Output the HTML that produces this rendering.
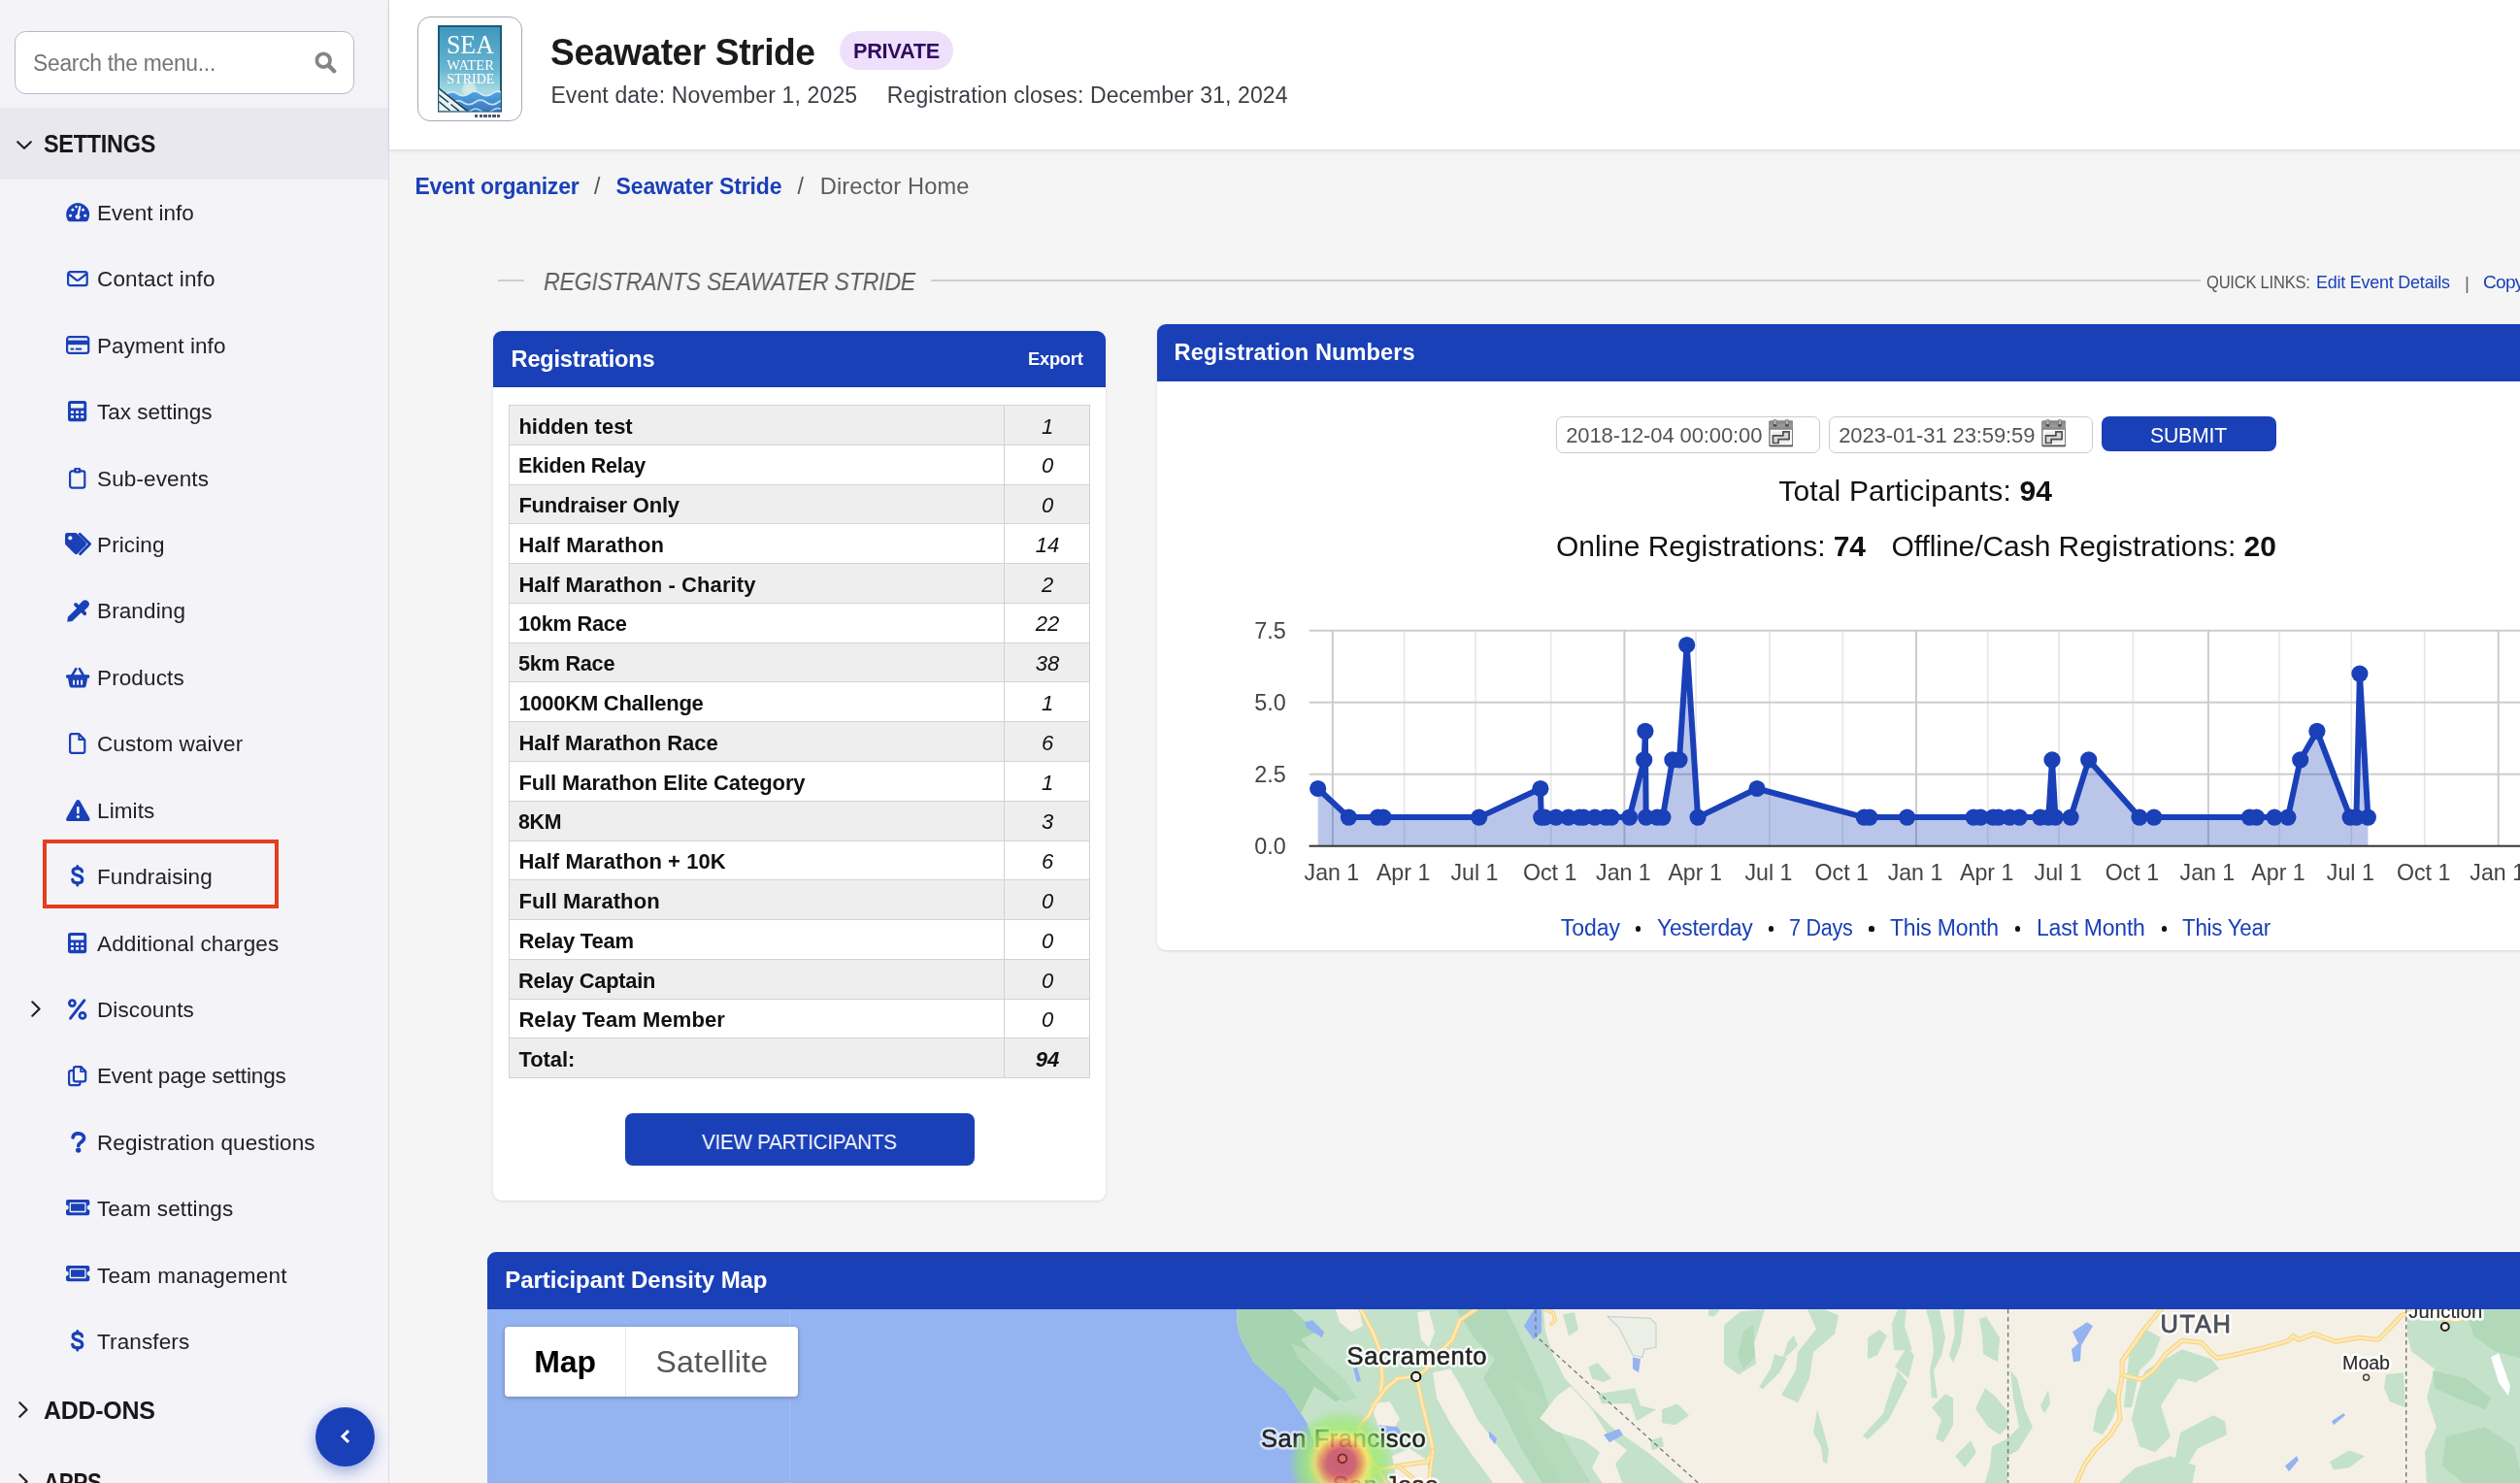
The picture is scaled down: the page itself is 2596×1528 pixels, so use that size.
<!DOCTYPE html>
<html lang="en"><head><meta charset="utf-8"><title>Seawater Stride - Director Home</title>
<style>html,body{margin:0;padding:0}body{width:2596px;height:1528px;overflow:hidden;position:relative;background:#f5f5f5;font-family:'Liberation Sans', sans-serif;will-change:transform}div{box-sizing:content-box}</style></head>
<body>
<div style="position:absolute;left:0;top:0;width:400px;height:1528px;background:#f3f3f8;border-right:1px solid #dcdce5"></div>
<div style="position:absolute;left:15px;top:32px;width:348px;height:63px;border:1px solid #b8b8c6;border-radius:11.5px;background:#fff"></div>
<div style="position:absolute;left:34.00px;top:54.00px;font-size:23px;line-height:1;height:23px;white-space:pre;color:#757575;font-weight:400;font-style:normal;letter-spacing:-0.276px;transform:scaleX(0.9927);transform-origin:0 0;">Search the menu...</div>
<div style="position:absolute;left:324px;top:53.4px;width:23px;height:23px"><svg width="23" height="23" viewBox="0 0 23 23" style="display:block"><circle cx="9.2" cy="9.2" r="6.8" fill="none" stroke="#858585" stroke-width="3.8"/><path d="M14.4 14.4L20.2 20.2" stroke="#858585" stroke-width="4.4" stroke-linecap="round"/></svg></div>
<div style="position:absolute;left:0;top:111px;width:400px;height:74px;background:#e9e8ee"></div>
<div style="position:absolute;left:16.80px;top:145.10px;width:16px;height:9px"><svg width="16" height="9" viewBox="0 0 16 9" style="display:block;overflow:visible"><path d="M1.2 1.2L8 7.8L14.8 1.2" fill="none" stroke="#222" stroke-width="2.2" stroke-linecap="round" stroke-linejoin="round"/></svg></div>
<div style="position:absolute;left:45.30px;top:136.00px;font-size:25px;line-height:1;height:25px;white-space:pre;color:#181818;font-weight:700;font-style:normal;letter-spacing:-0.3px;transform:scaleX(0.9379);transform-origin:0 0;">SETTINGS</div>
<div style="position:absolute;left:67.85px;top:209.20px;width:24.3px;height:19.2px"><svg width="24.3" height="19.2" viewBox="0 0 24.3 19.2" style="display:block;overflow:visible"><path d="M12.15 0A12.15 12.15 0 0 0 1.7 18.1Q2.2 19.2 3.4 19.2H20.9Q22.1 19.2 22.6 18.1A12.15 12.15 0 0 0 12.15 0Z" fill="#1a40b8"/><path d="M12.1 14.6L14.3 4.2" stroke="#f3f3f8" stroke-width="2.3" stroke-linecap="round"/><circle cx="12.1" cy="14.6" r="2.5" fill="#f3f3f8"/><circle cx="4.6" cy="13.3" r="1.45" fill="#f3f3f8"/><circle cx="6.9" cy="7.3" r="1.45" fill="#f3f3f8"/><circle cx="10.6" cy="4.1" r="1.3" fill="#f3f3f8"/><circle cx="17.6" cy="7.3" r="1.45" fill="#f3f3f8"/><circle cx="19.8" cy="13.3" r="1.45" fill="#f3f3f8"/></svg></div>
<div style="position:absolute;left:100.00px;top:209.00px;font-size:22.5px;line-height:1;height:22.5px;white-space:pre;color:#222;font-weight:400;font-style:normal;letter-spacing:-0.038px;">Event info</div>
<div style="position:absolute;left:69.10px;top:279.12px;width:21.8px;height:16.2px"><svg width="21.8" height="16.2" viewBox="0 0 21.8 16.2" style="display:block;overflow:visible"><rect x="1.1" y="1.1" width="19.6" height="14" rx="2.2" fill="none" stroke="#1a40b8" stroke-width="2.2"/><path d="M1.6 3.2L9.6 9.3Q10.9 10.3 12.2 9.3L20.2 3.2" fill="none" stroke="#1a40b8" stroke-width="2.2" stroke-linejoin="round"/></svg></div>
<div style="position:absolute;left:100.00px;top:277.00px;font-size:22.5px;line-height:1;height:22.5px;white-space:pre;color:#222;font-weight:400;font-style:normal;letter-spacing:0.127px;">Contact info</div>
<div style="position:absolute;left:67.85px;top:346.14px;width:24.3px;height:19px"><svg width="24.3" height="19" viewBox="0 0 24.3 19" style="display:block;overflow:visible"><rect x="1.1" y="1.1" width="22.1" height="16.8" rx="2.4" fill="none" stroke="#1a40b8" stroke-width="2.2"/><rect x="1.1" y="4.6" width="22.1" height="4.6" fill="#1a40b8"/><rect x="4.6" y="12.6" width="3.6" height="2" fill="#1a40b8"/><rect x="9.8" y="12.6" width="6.4" height="2" fill="#1a40b8"/></svg></div>
<div style="position:absolute;left:100.00px;top:346.00px;font-size:22.5px;line-height:1;height:22.5px;white-space:pre;color:#222;font-weight:400;font-style:normal;letter-spacing:0.106px;">Payment info</div>
<div style="position:absolute;left:70.40px;top:413.46px;width:19.2px;height:21.2px"><svg width="19.2" height="21.2" viewBox="0 0 19.2 21.2" style="display:block;overflow:visible"><rect x="0" y="0" width="19.2" height="21.2" rx="2.6" fill="#1a40b8"/><rect x="2.9" y="2.9" width="13.4" height="4.6" rx=".6" fill="#f3f3f8"/><rect x="2.9" y="10.2" width="3" height="2.9" rx=".4" fill="#f3f3f8"/><rect x="2.9" y="14.9" width="3" height="2.9" rx=".4" fill="#f3f3f8"/><rect x="8.1" y="10.2" width="3" height="2.9" rx=".4" fill="#f3f3f8"/><rect x="8.1" y="14.9" width="3" height="2.9" rx=".4" fill="#f3f3f8"/><rect x="13.3" y="10.2" width="3" height="2.9" rx=".4" fill="#f3f3f8"/><rect x="13.3" y="14.9" width="3" height="2.9" rx=".4" fill="#f3f3f8"/></svg></div>
<div style="position:absolute;left:100.00px;top:414.00px;font-size:22.5px;line-height:1;height:22.5px;white-space:pre;color:#222;font-weight:400;font-style:normal;letter-spacing:-0.018px;">Tax settings</div>
<div style="position:absolute;left:71.30px;top:481.58px;width:17.4px;height:21.8px"><svg width="17.4" height="21.8" viewBox="0 0 17.4 21.8" style="display:block;overflow:visible"><rect x="1.1" y="3.4" width="15.2" height="17.3" rx="2.2" fill="none" stroke="#1a40b8" stroke-width="2.2"/><rect x="5" y="0" width="7.4" height="5.6" rx="1.8" fill="#1a40b8"/><circle cx="8.7" cy="2.6" r="1" fill="#f3f3f8"/></svg></div>
<div style="position:absolute;left:100.00px;top:483.00px;font-size:22.5px;line-height:1;height:22.5px;white-space:pre;color:#222;font-weight:400;font-style:normal;letter-spacing:0.12px;">Sub-events</div>
<div style="position:absolute;left:66.50px;top:549.40px;width:27px;height:23px"><svg width="27" height="23" viewBox="0 0 27 23" style="display:block;overflow:visible"><path d="M15.2 1.2L25.6 11.6L15.6 21.8" fill="none" stroke="#1a40b8" stroke-width="2.9" stroke-linecap="round" stroke-linejoin="round"/><path d="M0 2.2Q0 0 2.2 0H10.6Q11.6 0 12.4 .8L21.4 9.8Q23 11.4 21.4 13L13 21.5Q11.4 23 9.8 21.5L.8 12.4Q0 11.6 0 10.6Z" fill="#1a40b8"/><circle cx="5.3" cy="5.3" r="2.1" fill="#f3f3f8"/></svg></div>
<div style="position:absolute;left:100.00px;top:551.00px;font-size:22.5px;line-height:1;height:22.5px;white-space:pre;color:#222;font-weight:400;font-style:normal;letter-spacing:0.12px;">Pricing</div>
<div style="position:absolute;left:68.50px;top:617.82px;width:23px;height:23px"><svg width="23" height="23" viewBox="0 0 23 23" style="display:block;overflow:visible"><path d="M.3 22.7L.9 17.7L10.7 7.9L15.3 12.5L5.5 22.1Z" fill="#1a40b8"/><path d="M9 4.9L18.3 14.2" stroke="#1a40b8" stroke-width="3.8" stroke-linecap="round"/><path d="M15.4 7.8L18.7 4.5" stroke="#1a40b8" stroke-width="8.2" stroke-linecap="round"/></svg></div>
<div style="position:absolute;left:100.00px;top:619.00px;font-size:22.5px;line-height:1;height:22.5px;white-space:pre;color:#222;font-weight:400;font-style:normal;letter-spacing:0.12px;">Branding</div>
<div style="position:absolute;left:67.90px;top:687.54px;width:24.2px;height:20.4px"><svg width="24.2" height="20.4" viewBox="0 0 24.2 20.4" style="display:block;overflow:visible"><rect x="0" y="7.2" width="24.2" height="3.6" rx="1.2" fill="#1a40b8"/><path d="M1.9 10.2H22.3L20.6 18.9Q20.3 20.4 18.8 20.4H5.4Q3.9 20.4 3.6 18.9Z" fill="#1a40b8"/><path d="M6.2 8L10.3 1.2M18 8L13.9 1.2" stroke="#1a40b8" stroke-width="2.6" stroke-linecap="round"/><rect x="7.1" y="12.6" width="1.9" height="5.2" rx=".9" fill="#f3f3f8"/><rect x="11.15" y="12.6" width="1.9" height="5.2" rx=".9" fill="#f3f3f8"/><rect x="15.2" y="12.6" width="1.9" height="5.2" rx=".9" fill="#f3f3f8"/></svg></div>
<div style="position:absolute;left:100.00px;top:688.00px;font-size:22.5px;line-height:1;height:22.5px;white-space:pre;color:#222;font-weight:400;font-style:normal;letter-spacing:0.12px;">Products</div>
<div style="position:absolute;left:71.30px;top:755.21px;width:17.4px;height:21.9px"><svg width="17.4" height="21.9" viewBox="0 0 17.4 21.9" style="display:block;overflow:visible"><path d="M3.2 1.1H10.2L16.3 7.2V18.7Q16.3 20.8 14.2 20.8H3.2Q1.1 20.8 1.1 18.7V3.2Q1.1 1.1 3.2 1.1Z" fill="none" stroke="#1a40b8" stroke-width="2.2" stroke-linejoin="round"/><path d="M10.4 1.4V7H16" fill="none" stroke="#1a40b8" stroke-width="2"/></svg></div>
<div style="position:absolute;left:100.00px;top:756.00px;font-size:22.5px;line-height:1;height:22.5px;white-space:pre;color:#222;font-weight:400;font-style:normal;letter-spacing:0.12px;">Custom waiver</div>
<div style="position:absolute;left:67.65px;top:823.58px;width:24.7px;height:22px"><svg width="24.7" height="22" viewBox="0 0 24.7 22" style="display:block;overflow:visible"><path d="M10.5 1.1Q12.35 -1.1 14.2 1.1L24.3 18.9Q25.3 22 22.4 22H2.3Q-.6 22 .4 18.9Z" fill="#1a40b8"/><rect x="11.05" y="6.9" width="2.6" height="7.6" rx="1" fill="#f3f3f8"/><circle cx="12.35" cy="17.6" r="1.65" fill="#f3f3f8"/></svg></div>
<div style="position:absolute;left:100.00px;top:825.00px;font-size:22.5px;line-height:1;height:22.5px;white-space:pre;color:#222;font-weight:400;font-style:normal;letter-spacing:0.12px;">Limits</div>
<div style="position:absolute;left:72.90px;top:891.40px;width:13.6px;height:22.4px"><svg width="13.6" height="22.4" viewBox="0 0 13.6 22.4" style="display:block;overflow:visible"><path d="M11.6 6.9C11.3 4.6 9.4 3.6 6.8 3.6C4 3.6 2.1 5 2.1 7.1C2.1 9.3 3.9 10.1 6.8 10.9C9.9 11.8 11.8 12.7 11.8 15.2C11.8 17.4 9.8 18.8 6.8 18.8C3.9 18.8 2 17.5 1.7 15.3" fill="none" stroke="#1a40b8" stroke-width="3.2" stroke-linecap="round"/><path d="M6.8 1.4V3.8M6.8 18.6V21" stroke="#1a40b8" stroke-width="3" stroke-linecap="round"/></svg></div>
<div style="position:absolute;left:100.00px;top:893.00px;font-size:22.5px;line-height:1;height:22.5px;white-space:pre;color:#222;font-weight:400;font-style:normal;letter-spacing:0.12px;">Fundraising</div>
<div style="position:absolute;left:70.40px;top:960.82px;width:19.2px;height:21.2px"><svg width="19.2" height="21.2" viewBox="0 0 19.2 21.2" style="display:block;overflow:visible"><rect x="0" y="0" width="19.2" height="21.2" rx="2.6" fill="#1a40b8"/><rect x="2.9" y="2.9" width="13.4" height="4.6" rx=".6" fill="#f3f3f8"/><rect x="2.9" y="10.2" width="3" height="2.9" rx=".4" fill="#f3f3f8"/><rect x="2.9" y="14.9" width="3" height="2.9" rx=".4" fill="#f3f3f8"/><rect x="8.1" y="10.2" width="3" height="2.9" rx=".4" fill="#f3f3f8"/><rect x="8.1" y="14.9" width="3" height="2.9" rx=".4" fill="#f3f3f8"/><rect x="13.3" y="10.2" width="3" height="2.9" rx=".4" fill="#f3f3f8"/><rect x="13.3" y="14.9" width="3" height="2.9" rx=".4" fill="#f3f3f8"/></svg></div>
<div style="position:absolute;left:100.00px;top:962.00px;font-size:22.5px;line-height:1;height:22.5px;white-space:pre;color:#222;font-weight:400;font-style:normal;letter-spacing:0.12px;">Additional charges</div>
<div style="position:absolute;left:70.30px;top:1028.84px;width:19.4px;height:22px"><svg width="19.4" height="22" viewBox="0 0 19.4 22" style="display:block;overflow:visible"><circle cx="4.4" cy="4.6" r="3" fill="none" stroke="#1a40b8" stroke-width="2.8"/><circle cx="15" cy="17.4" r="3" fill="none" stroke="#1a40b8" stroke-width="2.8"/><path d="M16.8 1.8L2.6 20.2" stroke="#1a40b8" stroke-width="3" stroke-linecap="round"/></svg></div>
<div style="position:absolute;left:100.00px;top:1030.00px;font-size:22.5px;line-height:1;height:22.5px;white-space:pre;color:#222;font-weight:400;font-style:normal;letter-spacing:0.12px;">Discounts</div>
<div style="position:absolute;left:70.35px;top:1097.66px;width:19.3px;height:21.2px"><svg width="19.3" height="21.2" viewBox="0 0 19.3 21.2" style="display:block;overflow:visible"><path d="M5.2 5.2H3.2Q1.1 5.2 1.1 7.3V18Q1.1 20.1 3.2 20.1H10.4Q12.5 20.1 12.5 18V16.6" fill="none" stroke="#1a40b8" stroke-width="2.2"/><path d="M8 1.1H13.4L18.2 5.9V14.2Q18.2 16.3 16.1 16.3H8Q5.9 16.3 5.9 14.2V3.2Q5.9 1.1 8 1.1Z" fill="#f3f3f8" stroke="#1a40b8" stroke-width="2.2" stroke-linejoin="round"/><path d="M13.2 1.4V6.1H17.9" fill="none" stroke="#1a40b8" stroke-width="1.8"/></svg></div>
<div style="position:absolute;left:100.00px;top:1098.00px;font-size:22.5px;line-height:1;height:22.5px;white-space:pre;color:#222;font-weight:400;font-style:normal;letter-spacing:-0.16px;">Event page settings</div>
<div style="position:absolute;left:72.60px;top:1166.08px;width:15.6px;height:21.8px"><svg width="15.6" height="21.8" viewBox="0 0 15.6 21.8" style="display:block;overflow:visible"><path d="M2.1 5.9C2.6 3.2 4.8 1.9 7.7 1.9C11 1.9 13.5 3.8 13.5 6.6C13.5 9 12 10 10.1 11.2C8.5 12.2 7.8 13 7.8 14.4" fill="none" stroke="#1a40b8" stroke-width="3.7" stroke-linecap="round" stroke-linejoin="round"/><circle cx="7.7" cy="19.1" r="2.7" fill="#1a40b8"/></svg></div>
<div style="position:absolute;left:100.00px;top:1167.00px;font-size:22.5px;line-height:1;height:22.5px;white-space:pre;color:#222;font-weight:400;font-style:normal;letter-spacing:0.089px;">Registration questions</div>
<div style="position:absolute;left:67.85px;top:1235.90px;width:24.3px;height:16.2px"><svg width="24.3" height="16.2" viewBox="0 0 24.3 16.2" style="display:block;overflow:visible"><path d="M2 0H22.3Q24.3 0 24.3 2V5.5A2.6 2.6 0 0 0 24.3 10.7V14.2Q24.3 16.2 22.3 16.2H2Q0 16.2 0 14.2V10.7A2.6 2.6 0 0 0 0 5.5V2Q0 0 2 0Z" fill="#1a40b8"/><rect x="4.3" y="3.7" width="15.7" height="8.8" rx=".6" fill="none" stroke="#f3f3f8" stroke-width="1.3"/></svg></div>
<div style="position:absolute;left:100.00px;top:1235.00px;font-size:22.5px;line-height:1;height:22.5px;white-space:pre;color:#222;font-weight:400;font-style:normal;letter-spacing:0.12px;">Team settings</div>
<div style="position:absolute;left:67.85px;top:1304.32px;width:24.3px;height:16.2px"><svg width="24.3" height="16.2" viewBox="0 0 24.3 16.2" style="display:block;overflow:visible"><path d="M2 0H22.3Q24.3 0 24.3 2V5.5A2.6 2.6 0 0 0 24.3 10.7V14.2Q24.3 16.2 22.3 16.2H2Q0 16.2 0 14.2V10.7A2.6 2.6 0 0 0 0 5.5V2Q0 0 2 0Z" fill="#1a40b8"/><rect x="4.3" y="3.7" width="15.7" height="8.8" rx=".6" fill="none" stroke="#f3f3f8" stroke-width="1.3"/></svg></div>
<div style="position:absolute;left:100.00px;top:1304.00px;font-size:22.5px;line-height:1;height:22.5px;white-space:pre;color:#222;font-weight:400;font-style:normal;letter-spacing:0.199px;">Team management</div>
<div style="position:absolute;left:72.90px;top:1370.34px;width:13.6px;height:22.4px"><svg width="13.6" height="22.4" viewBox="0 0 13.6 22.4" style="display:block;overflow:visible"><path d="M11.6 6.9C11.3 4.6 9.4 3.6 6.8 3.6C4 3.6 2.1 5 2.1 7.1C2.1 9.3 3.9 10.1 6.8 10.9C9.9 11.8 11.8 12.7 11.8 15.2C11.8 17.4 9.8 18.8 6.8 18.8C3.9 18.8 2 17.5 1.7 15.3" fill="none" stroke="#1a40b8" stroke-width="3.2" stroke-linecap="round"/><path d="M6.8 1.4V3.8M6.8 18.6V21" stroke="#1a40b8" stroke-width="3" stroke-linecap="round"/></svg></div>
<div style="position:absolute;left:100.00px;top:1372.00px;font-size:22.5px;line-height:1;height:22.5px;white-space:pre;color:#222;font-weight:400;font-style:normal;letter-spacing:0.12px;">Transfers</div>
<div style="position:absolute;left:44px;top:865px;width:235px;height:63px;border:4px solid #e63c1f"></div>
<div style="position:absolute;left:32.40px;top:1030.50px;width:10px;height:17px"><svg width="10" height="17" viewBox="0 0 10 17" style="display:block;overflow:visible"><path d="M1.3 1.3L8.6 8.5L1.3 15.7" fill="none" stroke="#222" stroke-width="2.2" stroke-linecap="round" stroke-linejoin="round"/></svg></div>
<div style="position:absolute;left:18.60px;top:1444.30px;width:10px;height:17px"><svg width="10" height="17" viewBox="0 0 10 17" style="display:block;overflow:visible"><path d="M1.3 1.3L8.6 8.5L1.3 15.7" fill="none" stroke="#222" stroke-width="2.2" stroke-linecap="round" stroke-linejoin="round"/></svg></div>
<div style="position:absolute;left:45.10px;top:1441.00px;font-size:25px;line-height:1;height:25px;white-space:pre;color:#181818;font-weight:700;font-style:normal;letter-spacing:-0.325px;">ADD-ONS</div>
<div style="position:absolute;left:18.60px;top:1518.00px;width:10px;height:17px"><svg width="10" height="17" viewBox="0 0 10 17" style="display:block;overflow:visible"><path d="M1.3 1.3L8.6 8.5L1.3 15.7" fill="none" stroke="#222" stroke-width="2.2" stroke-linecap="round" stroke-linejoin="round"/></svg></div>
<div style="position:absolute;left:45.10px;top:1515.00px;font-size:25px;line-height:1;height:25px;white-space:pre;color:#181818;font-weight:700;font-style:normal;letter-spacing:-0.3px;transform:scaleX(0.8910);transform-origin:0 0;">APPS</div>
<div style="position:absolute;left:325px;top:1449.8px;width:61px;height:61px;border-radius:50%;background:#1a40b8;box-shadow:0 5px 15px rgba(26,64,184,.42)"></div>
<div style="position:absolute;left:350px;top:1472px;width:12px;height:16px"><svg width="12" height="16" viewBox="0 0 12 16" style="display:block"><path d="M9 2.2L3 8L9 13.8" fill="none" stroke="#fff" stroke-width="3" stroke-linecap="butt" stroke-linejoin="miter"/></svg></div>
<div style="position:absolute;left:401px;top:0;width:2195px;height:154px;background:#fff;border-bottom:1px solid #dfdfe7;box-shadow:0 1px 4px rgba(0,0,0,.09)"></div>
<div style="position:absolute;left:430px;top:17px;width:106px;height:106px;border:1px solid #a9a9b4;border-radius:13px;background:#fff"></div>
<div style="position:absolute;left:451px;top:26.1px;width:66px;height:89.6px"><svg width="66" height="89.6" viewBox="0 0 66 89.6" style="display:block"><defs><linearGradient id="lg" x1="0" y1="0" x2="0" y2="1"><stop offset="0" stop-color="#3f97bd"/><stop offset=".5" stop-color="#68b5d0"/><stop offset=".76" stop-color="#a6d9e2"/><stop offset="1" stop-color="#a6d9e2"/></linearGradient><linearGradient id="wg" x1="0" y1="0" x2="0" y2="1"><stop offset="0" stop-color="#4ea6e4"/><stop offset="1" stop-color="#3a6fb6"/></linearGradient><radialGradient id="sg"><stop offset="0" stop-color="#d6eeea"/><stop offset=".7" stop-color="#cde9e7" stop-opacity=".9"/><stop offset="1" stop-color="#c2e4e6" stop-opacity="0"/></radialGradient><clipPath id="lc"><rect x="1.2" y="1.2" width="63.6" height="87.2"/></clipPath></defs><rect x="1" y="1" width="64" height="87.6" fill="url(#lg)" stroke="#1f5876" stroke-width="2"/><g clip-path="url(#lc)"><circle cx="32.5" cy="66.5" r="9" fill="url(#sg)"/><path d="M8 72Q14 66 20 70.5T32 70.5T44 70.5T56 70.5T68 70.5V92H8Z" fill="url(#wg)"/><path d="M8 72Q14 66 20 70.5T32 70.5T44 70.5T56 70.5T68 70.5" fill="none" stroke="#cdeaf4" stroke-width="1.7"/><path d="M14 81Q20 75 26 79.5T38 79.5T50 79.5T62 79.5T74 79.5" fill="none" stroke="#bfe3f2" stroke-width="1.7"/><path d="M32 90Q38 83.5 44 88T56 88T68 88" fill="none" stroke="#9fd4ef" stroke-width="1.7"/><path d="M1 65L30.5 88.6H1Z" fill="#e8f1ed"/><path d="M1 65L30.5 88.6M1 71.5L11 79.5M13.5 81.5L22 88.4M1 78.6L12.6 88" stroke="#173a55" stroke-width="1.5" fill="none"/></g><text x="33.4" y="29.2" text-anchor="middle" font-family="Liberation Serif, serif" font-size="27.8" fill="#fff" textLength="49" lengthAdjust="spacingAndGlyphs">SEA</text><text x="33.6" y="45.6" text-anchor="middle" font-family="Liberation Serif, serif" font-size="13.8" fill="#fff" textLength="48.6" lengthAdjust="spacingAndGlyphs">WATER</text><text x="33.8" y="59.8" text-anchor="middle" font-family="Liberation Serif, serif" font-size="13.8" fill="#fff" textLength="49" lengthAdjust="spacingAndGlyphs">STRIDE</text></svg></div>
<div style="position:absolute;left:489px;top:118.2px;width:27px;height:2.4px;opacity:.85;background:repeating-linear-gradient(90deg,#2a3f58 0 3.4px,transparent 3.4px 4.6px)"></div>
<div style="position:absolute;left:567.40px;top:35.00px;font-size:38px;line-height:1;height:38px;white-space:pre;color:#1b1b1b;font-weight:700;font-style:normal;letter-spacing:-0.456px;transform:scaleX(0.9795);transform-origin:0 0;">Seawater Stride</div>
<div style="position:absolute;left:865px;top:32px;width:117px;height:40px;border-radius:20px;background:#eee0fb"></div>
<div style="position:absolute;left:879.00px;top:42.00px;font-size:22px;line-height:1;height:22px;white-space:pre;color:#2e0b60;font-weight:700;font-style:normal;letter-spacing:-0.264px;transform:scaleX(0.9851);transform-origin:0 0;">PRIVATE</div>
<div style="position:absolute;left:567.40px;top:87.00px;font-size:23px;line-height:1;height:23px;white-space:pre;color:#3d3d47;font-weight:400;font-style:normal;letter-spacing:0.14px;">Event date: November 1, 2025</div>
<div style="position:absolute;left:913.80px;top:87.00px;font-size:23px;line-height:1;height:23px;white-space:pre;color:#3d3d47;font-weight:400;font-style:normal;letter-spacing:0.097px;">Registration closes: December 31, 2024</div>
<div style="position:absolute;left:427.40px;top:181.00px;font-size:23px;line-height:1;height:23px;white-space:pre;color:#1a40b8;font-weight:700;font-style:normal;letter-spacing:-0.236px;">Event organizer</div>
<div style="position:absolute;left:612.00px;top:181.00px;font-size:23px;line-height:1;height:23px;white-space:pre;color:#555;font-weight:400;font-style:normal;">/</div>
<div style="position:absolute;left:634.50px;top:181.00px;font-size:23px;line-height:1;height:23px;white-space:pre;color:#1a40b8;font-weight:700;font-style:normal;letter-spacing:-0.106px;">Seawater Stride</div>
<div style="position:absolute;left:821.40px;top:181.00px;font-size:23px;line-height:1;height:23px;white-space:pre;color:#555;font-weight:400;font-style:normal;">/</div>
<div style="position:absolute;left:844.80px;top:181.00px;font-size:23.6px;line-height:1;height:23.6px;white-space:pre;color:#5c5c5c;font-weight:400;font-style:normal;letter-spacing:0.116px;">Director Home</div>
<div style="position:absolute;left:513px;top:287.6px;width:27px;height:2px;background:#cfcfcf"></div>
<div style="position:absolute;left:560.00px;top:277.00px;font-size:26.5px;line-height:1;height:26.5px;white-space:pre;color:#5e5e5e;font-weight:400;font-style:italic;letter-spacing:-0.318px;transform:scaleX(0.8751);transform-origin:0 0;">REGISTRANTS SEAWATER STRIDE</div>
<div style="position:absolute;left:959.4px;top:287.6px;width:1308px;height:2px;background:#cfcfcf"></div>
<div style="position:absolute;left:2273.30px;top:281.00px;font-size:19px;line-height:1;height:19px;white-space:pre;color:#555;font-weight:400;font-style:normal;letter-spacing:-0.228px;transform:scaleX(0.8680);transform-origin:0 0;">QUICK LINKS:</div>
<div style="position:absolute;left:2386.20px;top:281.00px;font-size:19px;line-height:1;height:19px;white-space:pre;color:#1a40b8;font-weight:400;font-style:normal;letter-spacing:-0.228px;transform:scaleX(0.9440);transform-origin:0 0;">Edit Event Details</div>
<div style="position:absolute;left:2539.00px;top:282.00px;font-size:19px;line-height:1;height:19px;white-space:pre;color:#666;font-weight:400;font-style:normal;">|</div>
<div style="position:absolute;left:2558.00px;top:281.00px;font-size:19px;line-height:1;height:19px;white-space:pre;color:#1a40b8;font-weight:400;font-style:normal;letter-spacing:-0.7px;">Copy Event</div>
<div style="position:absolute;left:508px;top:341px;width:631px;height:896px;background:#fff;border-radius:9px;box-shadow:0 1px 3px rgba(0,0,0,.12)"></div>
<div style="position:absolute;left:508px;top:341px;width:631px;height:57.6px;background:#1a40b8;border-radius:9px 9px 0 0"></div>
<div style="position:absolute;left:526.60px;top:359.00px;font-size:23.6px;line-height:1;height:23.6px;white-space:pre;color:#fff;font-weight:700;font-style:normal;letter-spacing:-0.237px;">Registrations</div>
<div style="position:absolute;left:1059.10px;top:360.00px;font-size:19px;line-height:1;height:19px;white-space:pre;color:#fff;font-weight:700;font-style:normal;letter-spacing:-0.228px;transform:scaleX(0.9623);transform-origin:0 0;">Export</div>
<div style="position:absolute;left:524px;top:417px;width:599px;height:694px;background:#d3d3d3"></div><div style="position:absolute;left:525.4px;top:418.4px;width:508.6px;height:39.6px;background:#eee"></div><div style="position:absolute;left:1035.4px;top:418.4px;width:86.2px;height:39.6px;background:#eee"></div><div style="position:absolute;left:534.40px;top:429.00px;font-size:22px;line-height:1;height:22px;white-space:pre;color:#111;font-weight:700;font-style:normal;letter-spacing:-0.004px;">hidden test</div><div style="position:absolute;left:79.00px;width:2000px;text-align:center;top:429.00px;font-size:22px;line-height:1;height:22px;white-space:pre;color:#111;font-weight:400;font-style:italic;">1</div><div style="position:absolute;left:525.4px;top:459.4px;width:508.6px;height:39.6px;background:#fff"></div><div style="position:absolute;left:1035.4px;top:459.4px;width:86.2px;height:39.6px;background:#fff"></div><div style="position:absolute;left:534.40px;top:469.00px;font-size:22px;line-height:1;height:22px;white-space:pre;color:#111;font-weight:700;font-style:normal;letter-spacing:-0.264px;transform:scaleX(0.9784);transform-origin:0 0;">Ekiden Relay</div><div style="position:absolute;left:79.00px;width:2000px;text-align:center;top:469.00px;font-size:22px;line-height:1;height:22px;white-space:pre;color:#111;font-weight:400;font-style:italic;">0</div><div style="position:absolute;left:525.4px;top:500.4px;width:508.6px;height:38.6px;background:#eee"></div><div style="position:absolute;left:1035.4px;top:500.4px;width:86.2px;height:38.6px;background:#eee"></div><div style="position:absolute;left:534.40px;top:510.00px;font-size:22px;line-height:1;height:22px;white-space:pre;color:#111;font-weight:700;font-style:normal;letter-spacing:-0.215px;">Fundraiser Only</div><div style="position:absolute;left:79.00px;width:2000px;text-align:center;top:510.00px;font-size:22px;line-height:1;height:22px;white-space:pre;color:#111;font-weight:400;font-style:italic;">0</div><div style="position:absolute;left:525.4px;top:540.4px;width:508.6px;height:39.6px;background:#fff"></div><div style="position:absolute;left:1035.4px;top:540.4px;width:86.2px;height:39.6px;background:#fff"></div><div style="position:absolute;left:534.40px;top:551.00px;font-size:22px;line-height:1;height:22px;white-space:pre;color:#111;font-weight:700;font-style:normal;letter-spacing:0.247px;">Half Marathon</div><div style="position:absolute;left:79.00px;width:2000px;text-align:center;top:551.00px;font-size:22px;line-height:1;height:22px;white-space:pre;color:#111;font-weight:400;font-style:italic;">14</div><div style="position:absolute;left:525.4px;top:581.4px;width:508.6px;height:39.6px;background:#eee"></div><div style="position:absolute;left:1035.4px;top:581.4px;width:86.2px;height:39.6px;background:#eee"></div><div style="position:absolute;left:534.40px;top:592.00px;font-size:22px;line-height:1;height:22px;white-space:pre;color:#111;font-weight:700;font-style:normal;letter-spacing:0.09px;">Half Marathon - Charity</div><div style="position:absolute;left:79.00px;width:2000px;text-align:center;top:592.00px;font-size:22px;line-height:1;height:22px;white-space:pre;color:#111;font-weight:400;font-style:italic;">2</div><div style="position:absolute;left:525.4px;top:622.4px;width:508.6px;height:39.6px;background:#fff"></div><div style="position:absolute;left:1035.4px;top:622.4px;width:86.2px;height:39.6px;background:#fff"></div><div style="position:absolute;left:534.40px;top:632.00px;font-size:22px;line-height:1;height:22px;white-space:pre;color:#111;font-weight:700;font-style:normal;letter-spacing:-0.264px;transform:scaleX(0.9910);transform-origin:0 0;">10km Race</div><div style="position:absolute;left:79.00px;width:2000px;text-align:center;top:632.00px;font-size:22px;line-height:1;height:22px;white-space:pre;color:#111;font-weight:400;font-style:italic;">22</div><div style="position:absolute;left:525.4px;top:663.4px;width:508.6px;height:38.6px;background:#eee"></div><div style="position:absolute;left:1035.4px;top:663.4px;width:86.2px;height:38.6px;background:#eee"></div><div style="position:absolute;left:534.40px;top:673.00px;font-size:22px;line-height:1;height:22px;white-space:pre;color:#111;font-weight:700;font-style:normal;letter-spacing:-0.264px;transform:scaleX(0.9857);transform-origin:0 0;">5km Race</div><div style="position:absolute;left:79.00px;width:2000px;text-align:center;top:673.00px;font-size:22px;line-height:1;height:22px;white-space:pre;color:#111;font-weight:400;font-style:italic;">38</div><div style="position:absolute;left:525.4px;top:703.4px;width:508.6px;height:39.6px;background:#fff"></div><div style="position:absolute;left:1035.4px;top:703.4px;width:86.2px;height:39.6px;background:#fff"></div><div style="position:absolute;left:534.40px;top:714.00px;font-size:22px;line-height:1;height:22px;white-space:pre;color:#111;font-weight:700;font-style:normal;letter-spacing:-0.263px;">1000KM Challenge</div><div style="position:absolute;left:79.00px;width:2000px;text-align:center;top:714.00px;font-size:22px;line-height:1;height:22px;white-space:pre;color:#111;font-weight:400;font-style:italic;">1</div><div style="position:absolute;left:525.4px;top:744.4px;width:508.6px;height:39.6px;background:#eee"></div><div style="position:absolute;left:1035.4px;top:744.4px;width:86.2px;height:39.6px;background:#eee"></div><div style="position:absolute;left:534.40px;top:755.00px;font-size:22px;line-height:1;height:22px;white-space:pre;color:#111;font-weight:700;font-style:normal;letter-spacing:0.001px;">Half Marathon Race</div><div style="position:absolute;left:79.00px;width:2000px;text-align:center;top:755.00px;font-size:22px;line-height:1;height:22px;white-space:pre;color:#111;font-weight:400;font-style:italic;">6</div><div style="position:absolute;left:525.4px;top:785.4px;width:508.6px;height:39.6px;background:#fff"></div><div style="position:absolute;left:1035.4px;top:785.4px;width:86.2px;height:39.6px;background:#fff"></div><div style="position:absolute;left:534.40px;top:796.00px;font-size:22px;line-height:1;height:22px;white-space:pre;color:#111;font-weight:700;font-style:normal;letter-spacing:-0.113px;">Full Marathon Elite Category</div><div style="position:absolute;left:79.00px;width:2000px;text-align:center;top:796.00px;font-size:22px;line-height:1;height:22px;white-space:pre;color:#111;font-weight:400;font-style:italic;">1</div><div style="position:absolute;left:525.4px;top:826.4px;width:508.6px;height:39.6px;background:#eee"></div><div style="position:absolute;left:1035.4px;top:826.4px;width:86.2px;height:39.6px;background:#eee"></div><div style="position:absolute;left:534.40px;top:836.00px;font-size:22px;line-height:1;height:22px;white-space:pre;color:#111;font-weight:700;font-style:normal;letter-spacing:-0.264px;transform:scaleX(0.9702);transform-origin:0 0;">8KM</div><div style="position:absolute;left:79.00px;width:2000px;text-align:center;top:836.00px;font-size:22px;line-height:1;height:22px;white-space:pre;color:#111;font-weight:400;font-style:italic;">3</div><div style="position:absolute;left:525.4px;top:867.4px;width:508.6px;height:38.6px;background:#fff"></div><div style="position:absolute;left:1035.4px;top:867.4px;width:86.2px;height:38.6px;background:#fff"></div><div style="position:absolute;left:534.40px;top:877.00px;font-size:22px;line-height:1;height:22px;white-space:pre;color:#111;font-weight:700;font-style:normal;letter-spacing:0.063px;">Half Marathon + 10K</div><div style="position:absolute;left:79.00px;width:2000px;text-align:center;top:877.00px;font-size:22px;line-height:1;height:22px;white-space:pre;color:#111;font-weight:400;font-style:italic;">6</div><div style="position:absolute;left:525.4px;top:907.4px;width:508.6px;height:39.6px;background:#eee"></div><div style="position:absolute;left:1035.4px;top:907.4px;width:86.2px;height:39.6px;background:#eee"></div><div style="position:absolute;left:534.40px;top:918.00px;font-size:22px;line-height:1;height:22px;white-space:pre;color:#111;font-weight:700;font-style:normal;letter-spacing:0.083px;">Full Marathon</div><div style="position:absolute;left:79.00px;width:2000px;text-align:center;top:918.00px;font-size:22px;line-height:1;height:22px;white-space:pre;color:#111;font-weight:400;font-style:italic;">0</div><div style="position:absolute;left:525.4px;top:948.4px;width:508.6px;height:39.6px;background:#fff"></div><div style="position:absolute;left:1035.4px;top:948.4px;width:86.2px;height:39.6px;background:#fff"></div><div style="position:absolute;left:534.40px;top:959.00px;font-size:22px;line-height:1;height:22px;white-space:pre;color:#111;font-weight:700;font-style:normal;letter-spacing:-0.226px;">Relay Team</div><div style="position:absolute;left:79.00px;width:2000px;text-align:center;top:959.00px;font-size:22px;line-height:1;height:22px;white-space:pre;color:#111;font-weight:400;font-style:italic;">0</div><div style="position:absolute;left:525.4px;top:989.4px;width:508.6px;height:39.6px;background:#eee"></div><div style="position:absolute;left:1035.4px;top:989.4px;width:86.2px;height:39.6px;background:#eee"></div><div style="position:absolute;left:534.40px;top:1000.00px;font-size:22px;line-height:1;height:22px;white-space:pre;color:#111;font-weight:700;font-style:normal;letter-spacing:-0.264px;transform:scaleX(0.9932);transform-origin:0 0;">Relay Captain</div><div style="position:absolute;left:79.00px;width:2000px;text-align:center;top:1000.00px;font-size:22px;line-height:1;height:22px;white-space:pre;color:#111;font-weight:400;font-style:italic;">0</div><div style="position:absolute;left:525.4px;top:1030.4px;width:508.6px;height:38.6px;background:#fff"></div><div style="position:absolute;left:1035.4px;top:1030.4px;width:86.2px;height:38.6px;background:#fff"></div><div style="position:absolute;left:534.40px;top:1040.00px;font-size:22px;line-height:1;height:22px;white-space:pre;color:#111;font-weight:700;font-style:normal;letter-spacing:0.086px;">Relay Team Member</div><div style="position:absolute;left:79.00px;width:2000px;text-align:center;top:1040.00px;font-size:22px;line-height:1;height:22px;white-space:pre;color:#111;font-weight:400;font-style:italic;">0</div><div style="position:absolute;left:525.4px;top:1070.4px;width:508.6px;height:39.6px;background:#eee"></div><div style="position:absolute;left:1035.4px;top:1070.4px;width:86.2px;height:39.6px;background:#eee"></div><div style="position:absolute;left:534.40px;top:1081.00px;font-size:22px;line-height:1;height:22px;white-space:pre;color:#111;font-weight:700;font-style:normal;letter-spacing:-0.058px;">Total:</div><div style="position:absolute;left:79.00px;width:2000px;text-align:center;top:1081.00px;font-size:22px;line-height:1;height:22px;white-space:pre;color:#111;font-weight:700;font-style:italic;">94</div>
<div style="position:absolute;left:644px;top:1146.7px;width:360px;height:54px;border-radius:8px;background:#1a40b8"></div>
<div style="position:absolute;left:723.00px;top:1166.00px;font-size:22.5px;line-height:1;height:22.5px;white-space:pre;color:#fff;font-weight:400;font-style:normal;letter-spacing:-0.27px;transform:scaleX(0.9156);transform-origin:0 0;">VIEW PARTICIPANTS</div>
<div style="position:absolute;left:1192px;top:334.3px;width:1420px;height:645.2px;background:#fff;border-radius:9px;box-shadow:0 1px 3px rgba(0,0,0,.12)"></div>
<div style="position:absolute;left:1192px;top:334.3px;width:1420px;height:58.4px;background:#1a40b8;border-radius:9px 0 0 0"></div>
<div style="position:absolute;left:1209.50px;top:352.00px;font-size:23.6px;line-height:1;height:23.6px;white-space:pre;color:#fff;font-weight:700;font-style:normal;letter-spacing:0.092px;">Registration Numbers</div>
<div style="position:absolute;left:1603px;top:429.2px;width:270px;height:35.6px;border:1px solid #ccc;border-radius:7px;background:#fff"></div>
<div style="position:absolute;left:1613.20px;top:438.00px;font-size:22px;line-height:1;height:22px;white-space:pre;color:#555;font-weight:400;font-style:normal;letter-spacing:-0.116px;">2018-12-04 00:00:00</div>
<div style="position:absolute;left:1821.8px;top:432.2px;width:25.6px;height:28.6px"><svg width="25.6" height="28.6" viewBox="0 0 25.6 28.6" style="display:block"><defs><linearGradient id="cg" x1="0" y1="0" x2="0" y2="1"><stop offset="0" stop-color="#858585"/><stop offset=".6" stop-color="#9b9b9b"/><stop offset="1" stop-color="#7f7f7f"/></linearGradient></defs><rect x=".9" y="2.2" width="23.8" height="25.4" rx="1.3" fill="#fdfdfd" stroke="#7f7f7f" stroke-width="1.5"/><rect x=".2" y="1.6" width="25.2" height="9.2" rx="1.3" fill="url(#cg)"/><rect x=".6" y="26.4" width="24.4" height="1.9" rx=".8" fill="#5c5c5c"/><rect x="4.9" y=".2" width="3.2" height="6.4" rx="1.5" fill="#b5b5b5" stroke="#6e6e6e" stroke-width=".8"/><rect x="17.3" y=".2" width="3.2" height="6.4" rx="1.5" fill="#b5b5b5" stroke="#6e6e6e" stroke-width=".8"/><ellipse cx="6.5" cy="6.4" rx="2" ry="1.3" fill="#505050"/><ellipse cx="18.9" cy="6.4" rx="2" ry="1.3" fill="#505050"/><rect x="4.3" y="12.8" width="16.9" height="11.8" fill="#ececec"/><path d="M14.9 12.9H21.1V20.6H10.1V24.5H4.4V16.8H14.9Z" fill="#d6d6d6" stroke="#4d4d4d" stroke-width="1.7" stroke-linejoin="miter"/></svg></div>
<div style="position:absolute;left:1884px;top:429.2px;width:270px;height:35.6px;border:1px solid #ccc;border-radius:7px;background:#fff"></div>
<div style="position:absolute;left:1894.20px;top:438.00px;font-size:22px;line-height:1;height:22px;white-space:pre;color:#555;font-weight:400;font-style:normal;letter-spacing:-0.116px;">2023-01-31 23:59:59</div>
<div style="position:absolute;left:2102.8px;top:432.2px;width:25.6px;height:28.6px"><svg width="25.6" height="28.6" viewBox="0 0 25.6 28.6" style="display:block"><defs><linearGradient id="cg" x1="0" y1="0" x2="0" y2="1"><stop offset="0" stop-color="#858585"/><stop offset=".6" stop-color="#9b9b9b"/><stop offset="1" stop-color="#7f7f7f"/></linearGradient></defs><rect x=".9" y="2.2" width="23.8" height="25.4" rx="1.3" fill="#fdfdfd" stroke="#7f7f7f" stroke-width="1.5"/><rect x=".2" y="1.6" width="25.2" height="9.2" rx="1.3" fill="url(#cg)"/><rect x=".6" y="26.4" width="24.4" height="1.9" rx=".8" fill="#5c5c5c"/><rect x="4.9" y=".2" width="3.2" height="6.4" rx="1.5" fill="#b5b5b5" stroke="#6e6e6e" stroke-width=".8"/><rect x="17.3" y=".2" width="3.2" height="6.4" rx="1.5" fill="#b5b5b5" stroke="#6e6e6e" stroke-width=".8"/><ellipse cx="6.5" cy="6.4" rx="2" ry="1.3" fill="#505050"/><ellipse cx="18.9" cy="6.4" rx="2" ry="1.3" fill="#505050"/><rect x="4.3" y="12.8" width="16.9" height="11.8" fill="#ececec"/><path d="M14.9 12.9H21.1V20.6H10.1V24.5H4.4V16.8H14.9Z" fill="#d6d6d6" stroke="#4d4d4d" stroke-width="1.7" stroke-linejoin="miter"/></svg></div>
<div style="position:absolute;left:2165px;top:429.2px;width:180.2px;height:35.6px;border-radius:8px;background:#1a40b8"></div>
<div style="position:absolute;left:2215.20px;top:438.00px;font-size:22px;line-height:1;height:22px;white-space:pre;color:#fff;font-weight:400;font-style:normal;letter-spacing:-0.264px;transform:scaleX(0.9676);transform-origin:0 0;">SUBMIT</div>
<div style="position:absolute;left:1832.3px;top:491px;font-size:30px;line-height:1;white-space:pre;color:#111;letter-spacing:0.15px">Total Participants: <b>94</b></div>
<div style="position:absolute;left:1603px;top:548px;font-size:30px;line-height:1;white-space:pre;color:#111;letter-spacing:-0.05px">Online Registrations: <b>74</b></div>
<div style="position:absolute;left:1948.4px;top:548px;font-size:30px;line-height:1;white-space:pre;color:#111;letter-spacing:-0.05px">Offline/Cash Registrations: <b>20</b></div>
<div style="position:absolute;left:1280px;top:620px;width:1316px;height:300px;overflow:hidden"><svg width="1316" height="300" viewBox="0 0 1316 300" style="display:block;font-family:'Liberation Sans', sans-serif"><rect x="165.8" y="30" width="1.6" height="221" fill="#e6e6e6"/><rect x="239.2" y="30" width="1.6" height="221" fill="#e6e6e6"/><rect x="316.9" y="30" width="1.6" height="221" fill="#e6e6e6"/><rect x="466.3" y="30" width="1.6" height="221" fill="#e6e6e6"/><rect x="542.1" y="30" width="1.6" height="221" fill="#e6e6e6"/><rect x="617.5" y="30" width="1.6" height="221" fill="#e6e6e6"/><rect x="766.9" y="30" width="1.6" height="221" fill="#e6e6e6"/><rect x="840.3" y="30" width="1.6" height="221" fill="#e6e6e6"/><rect x="916.6" y="30" width="1.6" height="221" fill="#e6e6e6"/><rect x="1067.2" y="30" width="1.6" height="221" fill="#e6e6e6"/><rect x="1141.5" y="30" width="1.6" height="221" fill="#e6e6e6"/><rect x="1216.9" y="30" width="1.6" height="221" fill="#e6e6e6"/><rect x="91.9" y="30" width="2" height="221" fill="#ccc"/><rect x="392.4" y="30" width="2" height="221" fill="#ccc"/><rect x="693.0" y="30" width="2" height="221" fill="#ccc"/><rect x="993.9" y="30" width="2" height="221" fill="#ccc"/><rect x="1292.7" y="30" width="2" height="221" fill="#ccc"/><rect x="68.6" y="176.7" width="1260" height="2" fill="#ccc"/><rect x="68.6" y="102.7" width="1260" height="2" fill="#ccc"/><rect x="68.6" y="28.7" width="1260" height="2" fill="#ccc"/><polygon points="77.7,251.7 77.7,192.5 109.4,222.1 139.4,222.1 145.1,222.1 243.7,222.1 306.9,192.5 307.7,222.1 311.4,222.1 322.9,222.1 335.7,222.1 347.1,222.1 351.4,222.1 362.9,222.1 374.3,222.1 380.0,222.1 398.6,222.1 413.7,162.9 414.9,133.3 415.7,222.1 427.1,222.1 432.9,222.1 442.9,162.9 450.0,162.9 457.7,44.5 469.1,222.1 530.0,192.5 640.3,222.1 646.0,222.1 684.6,222.1 753.1,222.1 760.3,222.1 773.1,222.1 778.9,222.1 790.3,222.1 800.3,222.1 821.7,222.1 830.3,222.1 834.0,162.9 837.4,222.1 853.1,222.1 871.7,162.9 924.0,222.1 938.9,222.1 1037.4,222.1 1044.6,222.1 1063.1,222.1 1076.9,222.1 1089.7,162.9 1106.9,133.3 1141.1,222.1 1147.4,222.1 1150.9,74.1 1159.4,222.1 1159.4,251.7" fill="#1a40b8" fill-opacity=".3"/><rect x="68.6" y="250.7" width="1260" height="2" fill="#333"/><polyline points="77.7,192.5 109.4,222.1 139.4,222.1 145.1,222.1 243.7,222.1 306.9,192.5 307.7,222.1 311.4,222.1 322.9,222.1 335.7,222.1 347.1,222.1 351.4,222.1 362.9,222.1 374.3,222.1 380.0,222.1 398.6,222.1 413.7,162.9 414.9,133.3 415.7,222.1 427.1,222.1 432.9,222.1 442.9,162.9 450.0,162.9 457.7,44.5 469.1,222.1 530.0,192.5 640.3,222.1 646.0,222.1 684.6,222.1 753.1,222.1 760.3,222.1 773.1,222.1 778.9,222.1 790.3,222.1 800.3,222.1 821.7,222.1 830.3,222.1 834.0,162.9 837.4,222.1 853.1,222.1 871.7,162.9 924.0,222.1 938.9,222.1 1037.4,222.1 1044.6,222.1 1063.1,222.1 1076.9,222.1 1089.7,162.9 1106.9,133.3 1141.1,222.1 1147.4,222.1 1150.9,74.1 1159.4,222.1" fill="none" stroke="#1a40b8" stroke-width="6" stroke-linejoin="round"/><circle cx="77.7" cy="192.5" r="8.6" fill="#1a40b8"/><circle cx="109.4" cy="222.1" r="8.6" fill="#1a40b8"/><circle cx="139.4" cy="222.1" r="8.6" fill="#1a40b8"/><circle cx="145.1" cy="222.1" r="8.6" fill="#1a40b8"/><circle cx="243.7" cy="222.1" r="8.6" fill="#1a40b8"/><circle cx="306.9" cy="192.5" r="8.6" fill="#1a40b8"/><circle cx="307.7" cy="222.1" r="8.6" fill="#1a40b8"/><circle cx="311.4" cy="222.1" r="8.6" fill="#1a40b8"/><circle cx="322.9" cy="222.1" r="8.6" fill="#1a40b8"/><circle cx="335.7" cy="222.1" r="8.6" fill="#1a40b8"/><circle cx="347.1" cy="222.1" r="8.6" fill="#1a40b8"/><circle cx="351.4" cy="222.1" r="8.6" fill="#1a40b8"/><circle cx="362.9" cy="222.1" r="8.6" fill="#1a40b8"/><circle cx="374.3" cy="222.1" r="8.6" fill="#1a40b8"/><circle cx="380.0" cy="222.1" r="8.6" fill="#1a40b8"/><circle cx="398.6" cy="222.1" r="8.6" fill="#1a40b8"/><circle cx="413.7" cy="162.9" r="8.6" fill="#1a40b8"/><circle cx="414.9" cy="133.3" r="8.6" fill="#1a40b8"/><circle cx="415.7" cy="222.1" r="8.6" fill="#1a40b8"/><circle cx="427.1" cy="222.1" r="8.6" fill="#1a40b8"/><circle cx="432.9" cy="222.1" r="8.6" fill="#1a40b8"/><circle cx="442.9" cy="162.9" r="8.6" fill="#1a40b8"/><circle cx="450.0" cy="162.9" r="8.6" fill="#1a40b8"/><circle cx="457.7" cy="44.5" r="8.6" fill="#1a40b8"/><circle cx="469.1" cy="222.1" r="8.6" fill="#1a40b8"/><circle cx="530.0" cy="192.5" r="8.6" fill="#1a40b8"/><circle cx="640.3" cy="222.1" r="8.6" fill="#1a40b8"/><circle cx="646.0" cy="222.1" r="8.6" fill="#1a40b8"/><circle cx="684.6" cy="222.1" r="8.6" fill="#1a40b8"/><circle cx="753.1" cy="222.1" r="8.6" fill="#1a40b8"/><circle cx="760.3" cy="222.1" r="8.6" fill="#1a40b8"/><circle cx="773.1" cy="222.1" r="8.6" fill="#1a40b8"/><circle cx="778.9" cy="222.1" r="8.6" fill="#1a40b8"/><circle cx="790.3" cy="222.1" r="8.6" fill="#1a40b8"/><circle cx="800.3" cy="222.1" r="8.6" fill="#1a40b8"/><circle cx="821.7" cy="222.1" r="8.6" fill="#1a40b8"/><circle cx="830.3" cy="222.1" r="8.6" fill="#1a40b8"/><circle cx="834.0" cy="162.9" r="8.6" fill="#1a40b8"/><circle cx="837.4" cy="222.1" r="8.6" fill="#1a40b8"/><circle cx="853.1" cy="222.1" r="8.6" fill="#1a40b8"/><circle cx="871.7" cy="162.9" r="8.6" fill="#1a40b8"/><circle cx="924.0" cy="222.1" r="8.6" fill="#1a40b8"/><circle cx="938.9" cy="222.1" r="8.6" fill="#1a40b8"/><circle cx="1037.4" cy="222.1" r="8.6" fill="#1a40b8"/><circle cx="1044.6" cy="222.1" r="8.6" fill="#1a40b8"/><circle cx="1063.1" cy="222.1" r="8.6" fill="#1a40b8"/><circle cx="1076.9" cy="222.1" r="8.6" fill="#1a40b8"/><circle cx="1089.7" cy="162.9" r="8.6" fill="#1a40b8"/><circle cx="1106.9" cy="133.3" r="8.6" fill="#1a40b8"/><circle cx="1141.1" cy="222.1" r="8.6" fill="#1a40b8"/><circle cx="1147.4" cy="222.1" r="8.6" fill="#1a40b8"/><circle cx="1150.9" cy="74.1" r="8.6" fill="#1a40b8"/><circle cx="1159.4" cy="222.1" r="8.6" fill="#1a40b8"/><text x="44.9" y="260.0" text-anchor="end" font-size="23.4" fill="#444">0.0</text><text x="44.9" y="186.0" text-anchor="end" font-size="23.4" fill="#444">2.5</text><text x="44.9" y="112.0" text-anchor="end" font-size="23.4" fill="#444">5.0</text><text x="44.9" y="38.0" text-anchor="end" font-size="23.4" fill="#444">7.5</text><text x="91.9" y="287.1" text-anchor="middle" font-size="23.2" fill="#444">Jan 1</text><text x="165.6" y="287.1" text-anchor="middle" font-size="23.2" fill="#444">Apr 1</text><text x="239.0" y="287.1" text-anchor="middle" font-size="23.2" fill="#444">Jul 1</text><text x="316.7" y="287.1" text-anchor="middle" font-size="23.2" fill="#444">Oct 1</text><text x="392.4" y="287.1" text-anchor="middle" font-size="23.2" fill="#444">Jan 1</text><text x="466.1" y="287.1" text-anchor="middle" font-size="23.2" fill="#444">Apr 1</text><text x="541.9" y="287.1" text-anchor="middle" font-size="23.2" fill="#444">Jul 1</text><text x="617.3" y="287.1" text-anchor="middle" font-size="23.2" fill="#444">Oct 1</text><text x="693.0" y="287.1" text-anchor="middle" font-size="23.2" fill="#444">Jan 1</text><text x="766.7" y="287.1" text-anchor="middle" font-size="23.2" fill="#444">Apr 1</text><text x="840.1" y="287.1" text-anchor="middle" font-size="23.2" fill="#444">Jul 1</text><text x="916.4" y="287.1" text-anchor="middle" font-size="23.2" fill="#444">Oct 1</text><text x="993.9" y="287.1" text-anchor="middle" font-size="23.2" fill="#444">Jan 1</text><text x="1067.0" y="287.1" text-anchor="middle" font-size="23.2" fill="#444">Apr 1</text><text x="1141.3" y="287.1" text-anchor="middle" font-size="23.2" fill="#444">Jul 1</text><text x="1216.7" y="287.1" text-anchor="middle" font-size="23.2" fill="#444">Oct 1</text><text x="1292.7" y="287.1" text-anchor="middle" font-size="23.2" fill="#444">Jan 1</text></svg></div>
<div style="position:absolute;left:1607.70px;top:945.00px;font-size:23px;line-height:1;height:23px;white-space:pre;color:#1a40b8;font-weight:400;font-style:normal;letter-spacing:0.005px;">Today</div>
<div style="position:absolute;left:1706.60px;top:945.00px;font-size:23px;line-height:1;height:23px;white-space:pre;color:#1a40b8;font-weight:400;font-style:normal;letter-spacing:-0.276px;transform:scaleX(0.9953);transform-origin:0 0;">Yesterday</div>
<div style="position:absolute;left:1842.90px;top:945.00px;font-size:23px;line-height:1;height:23px;white-space:pre;color:#1a40b8;font-weight:400;font-style:normal;letter-spacing:-0.276px;transform:scaleX(0.9351);transform-origin:0 0;">7 Days</div>
<div style="position:absolute;left:1946.90px;top:945.00px;font-size:23px;line-height:1;height:23px;white-space:pre;color:#1a40b8;font-weight:400;font-style:normal;letter-spacing:-0.177px;">This Month</div>
<div style="position:absolute;left:2098.00px;top:945.00px;font-size:23px;line-height:1;height:23px;white-space:pre;color:#1a40b8;font-weight:400;font-style:normal;letter-spacing:-0.21px;">Last Month</div>
<div style="position:absolute;left:2248.00px;top:945.00px;font-size:23px;line-height:1;height:23px;white-space:pre;color:#1a40b8;font-weight:400;font-style:normal;letter-spacing:-0.276px;transform:scaleX(0.9730);transform-origin:0 0;">This Year</div>
<div style="position:absolute;left:1684.8px;top:954.4px;width:5.2px;height:5.2px;border-radius:50%;background:#111"></div>
<div style="position:absolute;left:1821.7px;top:954.4px;width:5.2px;height:5.2px;border-radius:50%;background:#111"></div>
<div style="position:absolute;left:1925.4px;top:954.4px;width:5.2px;height:5.2px;border-radius:50%;background:#111"></div>
<div style="position:absolute;left:2075.7px;top:954.4px;width:5.2px;height:5.2px;border-radius:50%;background:#111"></div>
<div style="position:absolute;left:2226.5px;top:954.4px;width:5.2px;height:5.2px;border-radius:50%;background:#111"></div>
<div style="position:absolute;left:502px;top:1290px;width:2110px;height:59px;background:#1a40b8;border-radius:9px 0 0 0"></div>
<div style="position:absolute;left:520.30px;top:1307.00px;font-size:24px;line-height:1;height:24px;white-space:pre;color:#fff;font-weight:700;font-style:normal;letter-spacing:-0.085px;">Participant Density Map</div>
<div style="position:absolute;left:502px;top:1348.7px;width:2094px;height:180px;overflow:hidden"><svg width="2094" height="180" viewBox="0 0 2094 180" style="display:block;font-family:'Liberation Sans', sans-serif"><defs><radialGradient id="heat"><stop offset="0" stop-color="#cb4d67" stop-opacity=".88"/><stop offset=".26" stop-color="#cf5167" stop-opacity=".86"/><stop offset=".38" stop-color="#ee8f52" stop-opacity=".84"/><stop offset=".5" stop-color="#f1e75c" stop-opacity=".8"/><stop offset=".64" stop-color="#a2ec6c" stop-opacity=".78"/><stop offset=".82" stop-color="#9ae86c" stop-opacity=".55"/><stop offset="1" stop-color="#90e26e" stop-opacity="0"/></radialGradient></defs><rect width="2094" height="180" fill="#94b3f1"/><rect x="311" y="0" width="1" height="180" fill="#a3bef3"/><polygon points="772.3,-0.7 772.3,14.3 776.0,29.3 789.4,54.2 808.0,71.3 821.8,82.7 837.0,105.6 844.7,117.0 850.0,133.3 862.0,155.3 872.0,181.3 2098.0,181.3 2098.0,-0.7" fill="#f4f0e6" /><polygon points="772.3,-0.7 772.3,14.3 776.0,29.3 789.4,54.2 808.0,71.3 821.8,82.7 837.0,105.6 844.7,117.0 850.0,133.3 862.0,155.3 872.0,181.3 1236.0,181.3 1198.0,149.3 1158.0,121.3 1138.0,101.3 1110.0,71.3 1098.0,47.3 1090.0,23.3 1088.0,-0.7" fill="#c3e2c9" /><polygon points="772.3,-0.7 828.0,-0.7 854.0,23.3 838.0,31.3 864.0,59.3 890.0,87.3 874.0,95.3 852.0,79.3 838.0,107.3 821.8,82.7 808.0,71.3 789.4,54.2 776.0,29.3 772.3,14.3" fill="#a6d3b0" /><polygon points="828.0,35.3 850.0,43.3 882.0,71.3 896.0,91.3 882.0,95.3 856.0,71.3 834.0,49.3" fill="#b6dbbd" /><polygon points="834.0,0.3 868.0,0.3 882.0,17.3 862.0,27.3 846.0,13.3" fill="#c3e2c9" /><polygon points="998.0,0.3 1050.0,0.3 1070.0,41.3 1088.0,81.3 1098.0,121.3 1138.0,181.3 1088.0,181.3 1064.0,141.3 1044.0,101.3 1026.0,71.3 1038.0,51.3 1018.0,31.3" fill="#b0d8b9" /><polygon points="1054.0,71.3 1088.0,91.3 1108.0,131.3 1138.0,181.3 1108.0,181.3 1078.0,131.3" fill="#b5dabc" /><polygon points="1116.0,79.3 1102.0,89.3 1084.0,112.3 1100.0,125.3 1130.0,135.3 1146.0,147.3 1138.0,163.3 1150.0,181.3 1170.0,181.3 1162.0,159.3 1174.0,145.3 1154.0,129.3 1138.0,103.3" fill="#f4f0e6" /><polygon points="1134.0,59.3 1144.0,55.3 1158.0,71.3 1150.0,75.3 1138.0,71.3" fill="#c3e2c9" /><polygon points="1144.0,87.3 1182.0,81.3 1188.0,99.3 1204.0,103.3 1184.0,115.3 1178.0,97.3 1148.0,97.3" fill="#c3e2c9" /><polygon points="1108.0,5.3 1120.0,3.3 1124.0,21.3 1114.0,27.3" fill="#c3e2c9" /><polygon points="974.0,65.3 992.0,61.3 1004.0,81.3 1020.0,113.3 1044.0,145.3 1070.0,181.3 1038.0,181.3 1014.0,149.3 992.0,117.3 978.0,91.3" fill="#f4f0e6" /><polygon points="958.0,3.3 970.0,1.3 976.0,23.3 970.0,39.3 962.0,31.3" fill="#f4f0e6" /><polygon points="874.0,0.3 898.0,0.3 902.0,17.3 890.0,23.3 878.0,13.3" fill="#f4f0e6" /><polygon points="910.0,97.3 930.0,95.3 940.0,113.3 932.0,125.3 918.0,121.3" fill="#f4f0e6" /><polygon points="932.0,151.3 950.0,143.3 968.0,155.3 972.0,181.3 938.0,181.3" fill="#f4f0e6" /><polygon points="842.0,13.3 850.0,11.3 862.0,23.3 860.0,29.3 844.0,19.3" fill="#94b3f1" /><polygon points="892.0,61.3 896.0,59.3 900.0,73.3 896.0,75.3" fill="#94b3f1" /><polygon points="1068.0,17.3 1078.0,0.3 1086.0,0.3 1086.0,23.3 1078.0,31.3" fill="#94b3f1" /><polygon points="1150.0,129.3 1166.0,123.3 1170.0,129.3 1156.0,137.3" fill="#94b3f1" /><polygon points="1180.0,49.3 1188.0,51.3 1186.0,65.3 1180.0,61.3" fill="#94b3f1" /><polygon points="1032.0,125.3 1040.0,133.3 1038.0,139.3 1032.0,131.3" fill="#94b3f1" /><polygon points="918.0,119.3 938.0,121.3 942.0,129.3 926.0,129.3" fill="#94b3f1" /><polygon points="1154.0,7.3 1198.0,9.3 1204.0,15.3 1204.0,39.3 1192.0,41.3 1190.0,49.3 1180.0,47.3 1172.0,31.3 1166.0,19.3" fill="#ecefe6" stroke="#c3d3d3" stroke-width="1.2"/><polygon points="1274.0,16.3 1291.0,2.3 1316.0,0.3 1305.0,35.3 1307.0,56.3 1289.0,67.3 1274.0,56.3" fill="#c3e2c9" /><polygon points="1326.0,46.3 1339.0,50.3 1331.0,65.3 1314.0,82.3 1310.0,80.3 1322.0,61.3" fill="#c3e2c9" /><polygon points="1360.0,0.3 1378.0,0.3 1392.0,6.3 1388.0,25.3 1366.0,44.3 1362.0,71.3 1350.0,96.3 1333.0,88.3 1348.0,63.3 1350.0,44.3 1369.0,20.3" fill="#c3e2c9" /><polygon points="1417.0,130.3 1438.0,107.3 1446.0,81.3 1453.0,63.3 1463.0,75.3 1444.0,113.3 1422.0,134.3" fill="#c3e2c9" /><polygon points="1447.0,14.3 1453.0,0.3 1462.0,0.3 1460.0,17.3 1468.0,42.3 1449.0,42.3" fill="#c3e2c9" /><polygon points="1482.0,0.3 1496.0,0.3 1502.0,29.3 1498.0,47.3 1490.0,63.3 1494.0,91.3 1488.0,91.3 1486.0,63.3 1490.0,43.3 1488.0,21.3" fill="#c3e2c9" /><polygon points="1510.0,0.3 1522.0,0.3 1518.0,35.3 1510.0,55.3 1506.0,47.3 1512.0,25.3" fill="#c3e2c9" /><polygon points="1537.0,10.3 1544.0,7.3 1558.0,29.3 1556.0,54.3 1541.0,46.3 1540.0,27.3" fill="#c3e2c9" /><polygon points="1533.0,102.3 1543.0,81.3 1554.0,90.3 1566.0,105.3 1566.0,121.3 1558.0,129.3 1546.0,121.3" fill="#c3e2c9" /><polygon points="1569.0,63.3 1576.0,71.3 1584.0,103.3 1592.0,121.3 1577.0,145.3 1566.0,151.3 1566.0,133.3 1578.0,121.3 1572.0,91.3" fill="#c3e2c9" /><polygon points="1550.0,141.3 1566.0,133.3 1566.0,181.3 1542.0,181.3 1548.0,161.3" fill="#c3e2c9" /><polygon points="1600.0,99.3 1608.0,83.3 1610.0,97.3 1604.0,107.3" fill="#c3e2c9" /><polygon points="1370.0,103.3 1376.0,123.3 1382.0,145.3 1380.0,159.3 1376.0,157.3 1374.0,141.3 1366.0,127.3" fill="#c3e2c9" /><polygon points="1334.0,51.3 1340.0,33.3 1346.0,27.3 1350.0,37.3 1342.0,45.3" fill="#c3e2c9" /><polygon points="1210.0,103.3 1226.0,97.3 1238.0,109.3 1224.0,119.3 1210.0,117.3" fill="#c3e2c9" /><polygon points="1422.0,29.3 1434.0,21.3 1442.0,27.3 1432.0,47.3 1422.0,51.3" fill="#c3e2c9" /><polygon points="1450.0,59.3 1462.0,39.3 1470.0,47.3 1464.0,71.3" fill="#c3e2c9" /><polygon points="1488.0,101.3 1502.0,87.3 1510.0,91.3 1510.0,119.3 1500.0,137.3 1492.0,133.3 1498.0,113.3" fill="#c3e2c9" /><polygon points="1512.0,151.3 1528.0,135.3 1534.0,147.3 1522.0,163.3" fill="#c3e2c9" /><polygon points="1258.0,0.3 1270.0,0.3 1264.0,7.3 1258.0,7.3" fill="#c3e2c9" /><polygon points="1198.0,135.3 1210.0,131.3 1212.0,141.3 1200.0,145.3" fill="#c3e2c9" /><polygon points="1658.0,103.3 1670.0,81.3 1682.0,91.3 1674.0,113.3 1664.0,129.3 1654.0,125.3" fill="#c3e2c9" /><polygon points="1692.0,39.3 1710.0,21.3 1724.0,29.3 1716.0,49.3 1702.0,63.3 1694.0,101.3 1686.0,101.3" fill="#c3e2c9" /><polygon points="1708.0,63.3 1746.0,41.3 1776.0,51.3 1784.0,61.3 1760.0,75.3 1742.0,71.3 1724.0,99.3 1734.0,131.3 1718.0,147.3 1702.0,141.3 1694.0,113.3 1700.0,87.3" fill="#c3e2c9" /><polygon points="1744.0,127.3 1778.0,109.3 1790.0,115.3 1792.0,129.3 1762.0,143.3 1750.0,163.3 1738.0,157.3" fill="#c3e2c9" /><polygon points="1734.0,151.3 1760.0,161.3 1756.0,181.3 1678.0,181.3 1698.0,163.3" fill="#c3e2c9" /><polygon points="1898.0,157.3 1918.0,145.3 1934.0,151.3 1918.0,163.3 1902.0,165.3" fill="#c3e2c9" /><polygon points="1956.0,67.3 1974.0,65.3 1976.0,101.3 1960.0,95.3 1954.0,81.3" fill="#c3e2c9" /><polygon points="1294.0,23.3 1304.0,15.3 1306.0,49.3 1294.0,61.3 1288.0,47.3" fill="#b4d9bb" /><polygon points="1633.0,23.3 1648.0,13.3 1654.0,17.3 1642.0,37.3 1641.0,53.3 1634.0,54.3 1632.0,41.3 1639.0,35.3" fill="#94b3f1" /><polygon points="1900.0,115.3 1912.0,107.3 1914.0,109.3 1902.0,119.3" fill="#94b3f1" /><polygon points="1852.0,161.3 1864.0,151.3 1866.0,155.3 1856.0,167.3" fill="#94b3f1" /><polygon points="1978.0,0.3 2098.0,0.3 2098.0,181.3 1998.0,181.3 1996.0,147.3 2008.0,121.3 1998.0,91.3 2006.0,61.3 1982.0,43.3 1978.0,27.3" fill="#c3e2c9" /><polygon points="2038.0,0.3 2098.0,0.3 2098.0,51.3 2068.0,43.3 2046.0,27.3" fill="#b0d8b9" /><polygon points="2004.0,63.3 2038.0,71.3 2064.0,91.3 2058.0,103.3 2028.0,91.3 2006.0,81.3" fill="#b0d8b9" /><polygon points="2018.0,131.3 2058.0,121.3 2088.0,141.3 2098.0,181.3 2038.0,181.3 2014.0,161.3" fill="#b3d9ba" /><polygon points="2064.0,49.3 2072.0,45.3 2084.0,79.3 2082.0,89.3 2072.0,75.3" fill="#fff" /><polyline points="900.0,0.3 912.0,23.3 920.0,43.3 922.0,71.3 920.0,87.3" fill="none" stroke="#f7d488" stroke-width="5" stroke-linejoin="round" stroke-linecap="round" /><polyline points="900.0,0.3 912.0,23.3 920.0,43.3 922.0,71.3 920.0,87.3" fill="none" stroke="#fdeab5" stroke-width="2.6" stroke-linejoin="round" stroke-linecap="round" /><polyline points="1018.0,0.3 1002.0,11.3 994.0,31.3 978.0,47.3 968.0,61.3 957.0,69.3 938.0,71.3 926.0,81.3 914.0,97.3 908.0,109.3 900.0,117.3 900.0,131.3" fill="none" stroke="#f7d488" stroke-width="5" stroke-linejoin="round" stroke-linecap="round" /><polyline points="1018.0,0.3 1002.0,11.3 994.0,31.3 978.0,47.3 968.0,61.3 957.0,69.3 938.0,71.3 926.0,81.3 914.0,97.3 908.0,109.3 900.0,117.3 900.0,131.3" fill="none" stroke="#fdeab5" stroke-width="2.6" stroke-linejoin="round" stroke-linecap="round" /><polyline points="957.0,69.3 964.0,101.3 970.0,125.3 974.0,145.3 968.0,157.3 938.0,161.3 918.0,165.3 908.0,171.3" fill="none" stroke="#f7d488" stroke-width="5" stroke-linejoin="round" stroke-linecap="round" /><polyline points="957.0,69.3 964.0,101.3 970.0,125.3 974.0,145.3 968.0,157.3 938.0,161.3 918.0,165.3 908.0,171.3" fill="none" stroke="#fdeab5" stroke-width="2.6" stroke-linejoin="round" stroke-linecap="round" /><polyline points="900.0,117.3 894.0,131.3 902.0,147.3 916.0,161.3 926.0,179.3" fill="none" stroke="#f7d488" stroke-width="4.4" stroke-linejoin="round" stroke-linecap="round" /><polyline points="900.0,117.3 894.0,131.3 902.0,147.3 916.0,161.3 926.0,179.3" fill="none" stroke="#fdeab5" stroke-width="2.0000000000000004" stroke-linejoin="round" stroke-linecap="round" /><polyline points="974.0,145.3 970.0,179.3" fill="none" stroke="#f7d488" stroke-width="4.4" stroke-linejoin="round" stroke-linecap="round" /><polyline points="974.0,145.3 970.0,179.3" fill="none" stroke="#fdeab5" stroke-width="2.0000000000000004" stroke-linejoin="round" stroke-linecap="round" /><polyline points="938.0,161.3 960.0,179.3" fill="none" stroke="#f7d488" stroke-width="4.4" stroke-linejoin="round" stroke-linecap="round" /><polyline points="938.0,161.3 960.0,179.3" fill="none" stroke="#fdeab5" stroke-width="2.0000000000000004" stroke-linejoin="round" stroke-linecap="round" /><polyline points="1090.0,0.3 1098.0,3.3 1100.0,11.3 1096.0,15.3" fill="none" stroke="#f7d488" stroke-width="4" stroke-linejoin="round" stroke-linecap="round" /><polyline points="1090.0,0.3 1098.0,3.3 1100.0,11.3 1096.0,15.3" fill="none" stroke="#fdeab5" stroke-width="1.6" stroke-linejoin="round" stroke-linecap="round" /><polyline points="1724.0,0.3 1708.0,19.3 1694.0,39.3 1684.0,53.3 1684.0,69.3 1680.0,91.3 1682.0,113.3 1672.0,129.3 1656.0,145.3 1646.0,159.3 1636.0,181.3" fill="none" stroke="#f7d488" stroke-width="5" stroke-linejoin="round" stroke-linecap="round" /><polyline points="1724.0,0.3 1708.0,19.3 1694.0,39.3 1684.0,53.3 1684.0,69.3 1680.0,91.3 1682.0,113.3 1672.0,129.3 1656.0,145.3 1646.0,159.3 1636.0,181.3" fill="none" stroke="#fdeab5" stroke-width="2.6" stroke-linejoin="round" stroke-linecap="round" /><polyline points="1686.0,68.3 1704.0,72.3 1716.0,63.3 1730.0,45.3 1746.0,32.3 1766.0,34.3 1774.0,43.3 1782.0,50.3 1798.0,47.3 1828.0,40.3 1856.0,32.3 1860.0,27.3 1866.0,31.3 1882.0,25.3 1904.0,33.3 1928.0,29.3 1948.0,31.3 1960.0,19.3 1972.0,6.3 1988.0,1.3 2004.0,0.3" fill="none" stroke="#f7d488" stroke-width="5" stroke-linejoin="round" stroke-linecap="round" /><polyline points="1686.0,68.3 1704.0,72.3 1716.0,63.3 1730.0,45.3 1746.0,32.3 1766.0,34.3 1774.0,43.3 1782.0,50.3 1798.0,47.3 1828.0,40.3 1856.0,32.3 1860.0,27.3 1866.0,31.3 1882.0,25.3 1904.0,33.3 1928.0,29.3 1948.0,31.3 1960.0,19.3 1972.0,6.3 1988.0,1.3 2004.0,0.3" fill="none" stroke="#fdeab5" stroke-width="2.6" stroke-linejoin="round" stroke-linecap="round" /><polyline points="2004.0,0.3 2012.0,9.3 2028.0,11.3 2042.0,7.3" fill="none" stroke="#f7d488" stroke-width="4.4" stroke-linejoin="round" stroke-linecap="round" /><polyline points="2004.0,0.3 2012.0,9.3 2028.0,11.3 2042.0,7.3" fill="none" stroke="#fdeab5" stroke-width="2.0000000000000004" stroke-linejoin="round" stroke-linecap="round" /><path d="M1080 0.2999999999999545V27.299999999999955L1250 181.29999999999995" fill="none" stroke="#777" stroke-width="1.3" stroke-dasharray="4.5 3.5"/><path d="M1566.6 0V180M1976.6999999999998 0V180" fill="none" stroke="#777" stroke-width="1.4" stroke-dasharray="4.5 3.5"/><text x="885.6" y="57.0" font-size="25.5" textLength="143.8" lengthAdjust="spacing" fill="#fff" stroke="#fff" stroke-width="5.5" stroke-linejoin="round" stroke-opacity="0.85" fill-opacity="0.85">Sacramento</text><text x="885.6" y="57.0" font-size="25.5" textLength="143.8" lengthAdjust="spacing" fill="#222" stroke="#222" stroke-width="0.55" >Sacramento</text><circle cx="956.7" cy="69.39999999999986" r="4.6" fill="#f2f2ea" stroke="#111" stroke-width="2"/><text x="797.0" y="141.8" font-size="25.5" textLength="169.6" lengthAdjust="spacing" fill="#fff" stroke="#fff" stroke-width="5.5" stroke-linejoin="round" stroke-opacity="0.6" fill-opacity="0.6">San Francisco</text><text x="797.0" y="141.8" font-size="25.5" textLength="169.6" lengthAdjust="spacing" fill="#222" stroke="#222" stroke-width="0.55" >San Francisco</text><text x="870.4" y="189.9" font-size="25.5" textLength="109.5" lengthAdjust="spacing" fill="#fff" stroke="#fff" stroke-width="5.5" stroke-linejoin="round" stroke-opacity="0.85" fill-opacity="0.85">San Jose</text><text x="870.4" y="189.9" font-size="25.5" textLength="109.5" lengthAdjust="spacing" fill="#3a2a20" stroke="#3a2a20" stroke-width="0.55" >San Jose</text><text x="1723.4" y="23.7" font-size="25.5" textLength="72.6" lengthAdjust="spacing" fill="#fff" stroke="#fff" stroke-width="5.5" stroke-linejoin="round" stroke-opacity="0.85" fill-opacity="0.85">UTAH</text><text x="1723.4" y="23.7" font-size="25.5" textLength="72.6" lengthAdjust="spacing" fill="#4d5159" stroke="#4d5159" stroke-width="0.8" >UTAH</text><text x="1911.1" y="61.5" font-size="19.6" textLength="48.9" lengthAdjust="spacing" fill="#fff" stroke="#fff" stroke-width="5.5" stroke-linejoin="round" stroke-opacity="0.85" fill-opacity="0.85">Moab</text><text x="1911.1" y="61.5" font-size="19.6" textLength="48.9" lengthAdjust="spacing" fill="#2a2a2a" stroke="#2a2a2a" stroke-width="0.15" >Moab</text><circle cx="1935.6" cy="70.29999999999995" r="3" fill="#f4f0e6" stroke="#444" stroke-width="1.5"/><text x="1979.3" y="8.5" font-size="20.2" textLength="76" lengthAdjust="spacing" fill="#fff" stroke="#fff" stroke-width="5.5" stroke-linejoin="round" stroke-opacity="0.85" fill-opacity="0.85">Junction</text><text x="1979.3" y="8.5" font-size="20.2" textLength="76" lengthAdjust="spacing" fill="#2a2a2a" stroke="#2a2a2a" stroke-width="0.15" >Junction</text><circle cx="2016.8000000000002" cy="18.0" r="4" fill="#f4f0e6" stroke="#222" stroke-width="2"/><circle cx="879.5" cy="158.29999999999995" r="55" fill="url(#heat)"/><circle cx="880.9000000000001" cy="153.79999999999995" r="4.4" fill="#e8766c" fill-opacity=".7" stroke="#5a1f22" stroke-width="1.8" stroke-opacity=".85"/></svg></div>
<div style="position:absolute;left:520px;top:1367.2px;width:302.4px;height:72px;background:#fff;border-radius:4px;box-shadow:0 1px 4px rgba(0,0,0,.3)"></div>
<div style="position:absolute;left:644px;top:1367.2px;width:1px;height:72px;background:#e6e6e6"></div>
<div style="position:absolute;left:550.20px;top:1387.00px;font-size:32px;line-height:1;height:32px;white-space:pre;color:#000;font-weight:700;font-style:normal;letter-spacing:-0.033px;">Map</div>
<div style="position:absolute;left:675.50px;top:1387.00px;font-size:32px;line-height:1;height:32px;white-space:pre;color:#565656;font-weight:400;font-style:normal;letter-spacing:0.206px;">Satellite</div>
</body></html>
